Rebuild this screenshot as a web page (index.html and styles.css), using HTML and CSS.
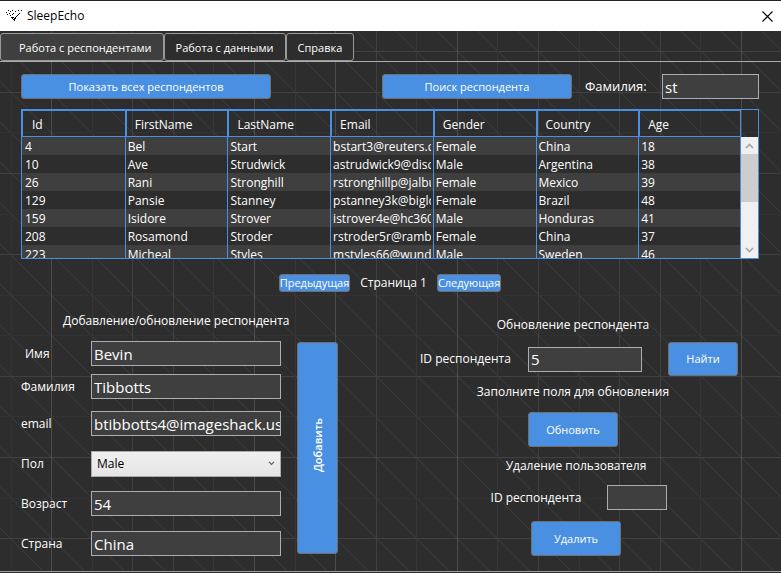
FILE: index.html
```html
<!DOCTYPE html>
<html lang="ru">
<head>
<meta charset="utf-8">
<title>SleepEcho</title>
<link rel="stylesheet" href="styles.css">
</head>
<body>
<header class="titlebar">
  <svg class="logo" width="18" height="14" viewBox="0 0 18 14" fill="#000" aria-hidden="true">
    <path d="M2 1h1v1H2zM0 3h1v1H0zM6 1h1v1H6zM4 2h1v1H4zM3 4h1v1H3zM1 5h1v1H1zM9 2h1v1H9zM7 4h1v1H7zM6 5h1v1H6zM4 6h1v1H4zM12 1h1v1h-1zM15 1h1v1h-1zM13 4h1v1h-1zM12 5h1v1h-1zM11 6h1v1h-1zM10 7h1v1h-1zM5 8h3v1H5zM6 9h1v1H6zM9 8h1v2H9zM7 10h2v1H7zM8 9h1v3H8z"/>
  </svg>
  <h1 class="title">SleepEcho</h1>
  <button class="close" type="button" aria-label="Закрыть">
    <svg width="11" height="11" viewBox="0 0 11 11" stroke="#000" stroke-width="1.1"><path d="M.5.5l10 10M10.5.5l-10 10"/></svg>
  </button>
</header>
<main class="window">
  <svg class="backdrop" aria-hidden="true" fill="none">
    <path stroke="#454545" stroke-width=".7" d="M-497 0l600 600M-456 0l600 600M-416 0l600 600M-375 0l600 600M-334 0l600 600M-294 0l600 600M-253 0l600 600M-213 0l600 600M-172 0l600 600M-131 0l600 600M-91 0l600 600M-50 0l600 600M-10 0l600 600M31 0l600 600M72 0l600 600M112 0l600 600M153 0l600 600M193 0l600 600M234 0l600 600M275 0l600 600M315 0l600 600M356 0l600 600M396 0l600 600M437 0l600 600M478 0l600 600M518 0l600 600M559 0l600 600M599 0l600 600M640 0l600 600M681 0l600 600M721 0l600 600M762 0l600 600"/>
    <path stroke="#323232" d="M0 101.500h2000M0 183.500h2000M0 264.500h2000M0 304.500h2000M0 385.500h2000M0 467.500h2000M11.500 0v2000"/>
    <path stroke="#414141" d="M0 20.500h2000M0 61.500h2000M0 142.500h2000M0 223.500h2000M0 345.500h2000M0 426.500h2000M0 507.500h2000"/>
    <path stroke="#363636" d="M92.500 0v2000M213.500 0v2000M295.500 0v2000M416.500 0v2000M497.500 0v2000M579.500 0v2000M700.500 0v2000"/>
    <path stroke="#404040" d="M132.500 0v2000M173.500 0v2000M376.500 0v2000M538.500 0v2000M619.500 0v2000M660.500 0v2000"/>
    <path stroke="#4c4c4c" d="M51.500 0v2000M254.500 0v2000M335.500 0v2000M457.500 0v2000M741.500 0v2000"/>
  </svg>
  <nav class="tabs">
    <button class="tab tab-active" type="button">Работа с респондентами</button>
    <button class="tab" type="button">Работа с данными</button>
    <button class="tab" type="button">Справка</button>
  </nav>
  <div class="page">
    <div class="toolbar">
      <button class="btn show-all" type="button">Показать всех респондентов</button>
      <button class="btn search" type="button">Поиск респондента</button>
      <label class="search-label" for="search">Фамилия:</label>
      <input class="field search-field" id="search" type="text" value="st">
    </div>
    <div class="grid">
      <table class="people">
        <thead>
          <tr><th>Id</th><th>FirstName</th><th>LastName</th><th>Email</th><th>Gender</th><th>Country</th><th>Age</th></tr>
        </thead>
        <tbody>
          <tr><td>4</td><td>Bel</td><td>Start</td><td><div class="clip">bstart3@reuters.co</div></td><td>Female</td><td>China</td><td>18</td></tr>
          <tr><td>10</td><td>Ave</td><td>Strudwick</td><td><div class="clip">astrudwick9@disco</div></td><td>Male</td><td>Argentina</td><td>38</td></tr>
          <tr><td>26</td><td>Rani</td><td>Stronghill</td><td><div class="clip">rstronghillp@jalbu</div></td><td>Female</td><td>Mexico</td><td>39</td></tr>
          <tr><td>129</td><td>Pansie</td><td>Stanney</td><td><div class="clip">pstanney3k@biglo</div></td><td>Female</td><td>Brazil</td><td>48</td></tr>
          <tr><td>159</td><td>Isidore</td><td>Strover</td><td><div class="clip">istrover4e@hc360</div></td><td>Male</td><td>Honduras</td><td>41</td></tr>
          <tr><td>208</td><td>Rosamond</td><td>Stroder</td><td><div class="clip">rstroder5r@rambl</div></td><td>Female</td><td>China</td><td>37</td></tr>
          <tr><td>223</td><td>Micheal</td><td>Styles</td><td><div class="clip">mstyles66@wunde</div></td><td>Male</td><td>Sweden</td><td>46</td></tr>
        </tbody>
      </table>
      <div class="scroll" aria-hidden="true">
        <div class="scroll-arrow"><svg width="9" height="6" viewBox="0 0 9 6" fill="none" stroke="#a6a6a6" stroke-width="1.7"><path d="M1 5l3.500-3.500L8 5"/></svg></div>
        <div class="scroll-thumb"></div>
        <div class="scroll-arrow scroll-down"><svg width="9" height="6" viewBox="0 0 9 6" fill="none" stroke="#a6a6a6" stroke-width="1.7"><path d="M1 1l3.500 3.500L8 1"/></svg></div>
      </div>
    </div>
    <div class="pager">
      <button class="btn" type="button">Предыдущая</button>
      <span>Страница 1</span>
      <button class="btn" type="button">Следующая</button>
    </div>
    <div class="forms">
      <form class="add">
        <h2 class="heading add-heading">Добавление/обновление респондента</h2>
        <div class="add-fields">
          <div class="names">
            <div class="row row-first"><label for="name">Имя</label><input class="field" id="name" type="text" value="Bevin"></div>
            <div class="row"><label for="surname">Фамилия</label><input class="field" id="surname" type="text" value="Tibbotts"></div>
          </div>
          <div class="details">
            <div class="row"><label for="email">email</label><input class="field" id="email" type="text" value="btibbotts4@imageshack.us"></div>
            <div class="row"><label for="gender">Пол</label>
              <div class="select-box">
                <select id="gender"><option>Male</option><option>Female</option></select>
                <svg class="chevron" width="7" height="5" viewBox="0 0 7 5" fill="none" stroke="#606060" stroke-width="1.2"><path d="M1 .8l2.500 2.500L6 .8"/></svg>
              </div>
            </div>
            <div class="row"><label for="age">Возраст</label><input class="field" id="age" type="text" value="54"></div>
            <div class="row"><label for="country">Страна</label><input class="field" id="country" type="text" value="China"></div>
          </div>
        </div>
        <button class="btn add-btn" type="button"><span>Добавить</span></button>
      </form>
      <form class="manage">
        <section class="update">
          <h2 class="heading">Обновление респондента</h2>
          <div class="find-row">
            <label for="update-id">ID респондента</label>
            <input class="field" id="update-id" type="text" value="5">
            <button class="btn" type="button">Найти</button>
          </div>
          <p class="hint">Заполните поля для обновления</p>
          <button class="btn action" type="button">Обновить</button>
        </section>
        <section class="delete">
          <h2 class="heading">Удаление пользователя</h2>
          <div class="delete-row">
            <label for="delete-id">ID респондента</label>
            <input class="field" id="delete-id" type="text">
          </div>
          <button class="btn action" type="button">Удалить</button>
        </section>
      </form>
    </div>
  </div>
</main>
</body>
</html>
```
FILE: styles.css
```css
* { box-sizing: border-box; }

body {
  margin: 0;
  min-height: 100vh;
  display: flex;
  flex-direction: column;
  background: #2d2d2d;
  color: #fff;
  font: 12px/18px "Open Sans", "Noto Sans", sans-serif;
}

button, input, select { font: inherit; color: inherit; margin: 0; }
label { white-space: nowrap; }

.titlebar {
  display: flex;
  align-items: center;
  height: 31px;
  padding: 0 8px 0 6px;
  border-top: 1px solid #222226;
  background: #fff;
  color: #000;
}
.title { margin: 0 auto 0 3px; font-size: 12px; font-weight: 400; }
.close { display: flex; padding: 0; border: 0; background: none; }

.window {
  position: relative;
  flex: 1;
  margin-bottom: 1px;
  border-bottom: 1px solid #9a9a9a;
}
.backdrop { position: absolute; width: 100%; height: 100%; }

.tabs {
  position: relative;
  display: flex;
  padding-top: 2px;
  border-bottom: 1px solid #acacac;
}
.tab {
  height: 28px;
  padding: 2px 11px 0;
  border: 1px solid #999;
  border-radius: 3px;
  background: #2d2d2d;
  font-size: 11px;
  font-weight: 500;
}
.tab-active { padding-left: 18px; background: #3f3f3f; }

.page { position: relative; padding: 12px 22px 0 21px; }

.btn {
  padding: 0;
  border: 1px solid #707070;
  border-radius: 3px;
  background: #4a90e2;
  font-size: 11px;
  font-weight: 500;
}

.field {
  width: 100%;
  min-width: 0;
  height: 25px;
  padding: 0 0 0 2px;
  border: 1px solid #abadb3;
  border-radius: 0;
  background: #3f3f3f;
  font-size: 15px;
}

.toolbar { display: flex; height: 25px; align-items: stretch; }
.show-all { width: 250px; }
.search { width: 190px; margin-left: auto; }
.search-label { width: 90px; padding: 3px 0 0 13px; font-size: 13px; }
.search-field { width: 97px; }

.grid {
  display: flex;
  height: 150px;
  margin-top: 10px;
  border: 1px solid #4a90e2;
  overflow: hidden;
}
.people {
  flex: 1;
  width: 100%;
  min-width: 0;
  height: max-content;
  table-layout: fixed;
  border-collapse: separate;
  border-spacing: 0;
}
.people th {
  height: 27px;
  padding: 3px 0 0 8px;
  border: 1px solid #4a90e2;
  border-width: 1px 0 1px 2px;
  text-align: left;
  font-weight: 400;
}
.people th:first-child { padding-left: 9px; border-left-width: 1px; }
.people th:last-child, .people td:last-child { border-right-width: 1px; }
.people td {
  height: 18px;
  padding: 1px 2px 0;
  border: 0 solid #4a90e2;
  border-left-width: 1px;
  line-height: 17px;
  white-space: nowrap;
}
.people td:first-child { padding-left: 3px; border-left-width: 0; }
.people tbody tr { background: #2d2d2d; }
.people tbody tr:nth-child(odd) { background: #3f3f3f; }
.clip { overflow: hidden; }

.scroll {
  display: flex;
  flex-direction: column;
  width: 17px;
  margin-top: 27px;
  background: #f0f0f0;
}
.scroll-arrow { display: flex; height: 17px; align-items: center; justify-content: center; }
.scroll-thumb { height: 48px; background: #cdcdcd; }
.scroll-down { margin-top: auto; }

.pager { display: flex; justify-content: center; gap: 10px; height: 18px; margin-top: 15px; }
.pager .btn { line-height: 16px; }

.forms { display: flex; justify-content: space-between; padding-right: 21px; }
.heading { margin: 0; font-size: 12px; font-weight: 400; }

.add {
  display: grid;
  grid-template-columns: 260px 41px;
  column-gap: 16px;
  align-content: start;
  margin-top: 20px;
}
.add-heading { grid-column: 1 / -1; padding-left: 42px; }
.add-fields { display: grid; align-content: start; row-gap: 12px; margin-top: 11px; }
.names { display: grid; row-gap: 8px; }
.details { display: grid; row-gap: 15px; }
.row { display: grid; grid-template-columns: 70px 1fr; align-items: center; height: 25px; }
.row-first label { padding-left: 4px; }
.add-btn { height: 212px; margin-top: 12px; }
.add-btn span { display: inline-block; writing-mode: vertical-rl; rotate: 180deg; font-weight: 600; }

.select-box { position: relative; }
.select-box select {
  display: block;
  width: 100%;
  height: 26px;
  padding: 0 5px;
  border: 1px solid #acacac;
  border-radius: 0;
  appearance: none;
  background: linear-gradient(#f0f0f0, #e5e5e5);
  color: #000;
}
.chevron { position: absolute; right: 6px; top: 10px; pointer-events: none; }

.manage { width: 318px; margin-top: 24px; }
.update, .delete { display: flex; flex-direction: column; align-items: center; }
.update { padding-right: 12px; }
.find-row { display: flex; align-items: center; width: 318px; height: 34px; margin: 8px -12px 0 0; }
.find-row label { width: 108px; }
.find-row .field { width: 114px; margin-right: 26px; }
.find-row .btn { width: 70px; height: 34px; }
.hint { margin: 7px 0 11px; }
.action { width: 90px; height: 35px; }
.delete { padding: 10px 6px 0 0; }
.delete-row { display: flex; align-items: center; gap: 26px; margin: 10px 0 11px 6px; }
.delete-row .field { width: 60px; }
```
